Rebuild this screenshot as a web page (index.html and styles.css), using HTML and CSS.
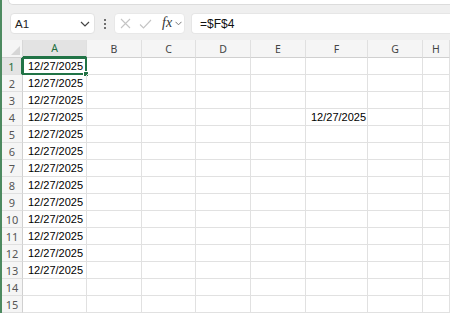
FILE: index.html
```html
<!DOCTYPE html>
<html>
<head>
<meta charset="utf-8">
<link rel="stylesheet" href="styles.css">
</head>
<body>
<div class="app">
  <div class="ribbon"></div>
  <div class="fbar">
    <div class="namebox">
      <span class="name">A1</span>
      <svg class="chev" width="10" height="6" viewBox="0 0 10 6"><path d="M1 1 L5 5 L9 1" fill="none" stroke="#444" stroke-width="1.2"/></svg>
    </div>
    <div class="dots"><i></i><i></i><i></i></div>
    <div class="fbtns">
      <svg width="11" height="11" viewBox="0 0 11 11"><path d="M1 1 L10 10 M10 1 L1 10" stroke="#c4c4c4" stroke-width="1.1" fill="none"/></svg>
      <svg width="13" height="10" viewBox="0 0 13 10"><path d="M1 5.5 L4.5 9 L12 1" stroke="#c4c4c4" stroke-width="1.1" fill="none"/></svg>
      <span class="fx">fx</span>
      <svg class="chev-s" width="7" height="5" viewBox="0 0 7 5"><path d="M0.5 0.8 L3.5 3.8 L6.5 0.8" fill="none" stroke="#777" stroke-width="1"/></svg>
    </div>
    <div class="finput">=$F$4</div>
  </div>
  <div class="sheet">
    <div class="corner"><svg width="9" height="9" viewBox="0 0 9 9"><path d="M9 0 L9 9 L0 9 Z" fill="#d6d6d6"/></svg></div>
    <div class="ch sel">A</div><div class="ch">B</div><div class="ch">C</div><div class="ch">D</div><div class="ch">E</div><div class="ch">F</div><div class="ch">G</div><div class="ch">H</div>

    <div class="rh sel">1</div><div class="c active">12/27/2025<span class="selbox"><span class="handle"></span></span></div><div class="c"></div><div class="c"></div><div class="c"></div><div class="c"></div><div class="c"></div><div class="c"></div><div class="c"></div>
    <div class="rh">2</div><div class="c">12/27/2025</div><div class="c"></div><div class="c"></div><div class="c"></div><div class="c"></div><div class="c"></div><div class="c"></div><div class="c"></div>
    <div class="rh">3</div><div class="c">12/27/2025</div><div class="c"></div><div class="c"></div><div class="c"></div><div class="c"></div><div class="c"></div><div class="c"></div><div class="c"></div>
    <div class="rh">4</div><div class="c">12/27/2025</div><div class="c"></div><div class="c"></div><div class="c"></div><div class="c"></div><div class="c">12/27/2025</div><div class="c"></div><div class="c"></div>
    <div class="rh">5</div><div class="c">12/27/2025</div><div class="c"></div><div class="c"></div><div class="c"></div><div class="c"></div><div class="c"></div><div class="c"></div><div class="c"></div>
    <div class="rh">6</div><div class="c">12/27/2025</div><div class="c"></div><div class="c"></div><div class="c"></div><div class="c"></div><div class="c"></div><div class="c"></div><div class="c"></div>
    <div class="rh">7</div><div class="c">12/27/2025</div><div class="c"></div><div class="c"></div><div class="c"></div><div class="c"></div><div class="c"></div><div class="c"></div><div class="c"></div>
    <div class="rh">8</div><div class="c">12/27/2025</div><div class="c"></div><div class="c"></div><div class="c"></div><div class="c"></div><div class="c"></div><div class="c"></div><div class="c"></div>
    <div class="rh">9</div><div class="c">12/27/2025</div><div class="c"></div><div class="c"></div><div class="c"></div><div class="c"></div><div class="c"></div><div class="c"></div><div class="c"></div>
    <div class="rh">10</div><div class="c">12/27/2025</div><div class="c"></div><div class="c"></div><div class="c"></div><div class="c"></div><div class="c"></div><div class="c"></div><div class="c"></div>
    <div class="rh">11</div><div class="c">12/27/2025</div><div class="c"></div><div class="c"></div><div class="c"></div><div class="c"></div><div class="c"></div><div class="c"></div><div class="c"></div>
    <div class="rh">12</div><div class="c">12/27/2025</div><div class="c"></div><div class="c"></div><div class="c"></div><div class="c"></div><div class="c"></div><div class="c"></div><div class="c"></div>
    <div class="rh">13</div><div class="c">12/27/2025</div><div class="c"></div><div class="c"></div><div class="c"></div><div class="c"></div><div class="c"></div><div class="c"></div><div class="c"></div>
    <div class="rh">14</div><div class="c"></div><div class="c"></div><div class="c"></div><div class="c"></div><div class="c"></div><div class="c"></div><div class="c"></div><div class="c"></div>
    <div class="rh">15</div><div class="c"></div><div class="c"></div><div class="c"></div><div class="c"></div><div class="c"></div><div class="c"></div><div class="c"></div><div class="c"></div>
  </div>
</div>
</body>
</html>
```

FILE: styles.css
```css
* { box-sizing: border-box; }
html, body { margin: 0; padding: 0; }
body {
  width: 450px;
  height: 313px;
  overflow: hidden;
  background: #ffffff;
  font-family: "Liberation Sans", Arial, sans-serif;
}
.app {
  width: 450px;
  height: 313px;
  overflow: hidden;
  background: #efefef;
  border-left: 2px solid #4d8a60;
  display: flex;
  flex-direction: column;
}
.ribbon {
  height: 5px;
  margin-left: 6px;
  background: #ffffff;
  border-bottom: 1px solid #dcdcdc;
  border-left: 1px solid #dcdcdc;
  border-bottom-left-radius: 6px;
  flex: none;
}
.fbar {
  flex: none;
  height: 35px;
  display: flex;
  align-items: flex-start;
  padding: 8px 0 0 8px;
}
.namebox {
  width: 85px;
  height: 21px;
  background: #fff;
  border: 1px solid #e2e2e2;
  border-radius: 4px;
  display: flex;
  align-items: center;
  justify-content: space-between;
  padding: 0 4px 0 4px;
}
.name { font-size: 11.5px; color: #222; }
.chev { margin-top: 1px; }
.dots {
  width: 19px;
  height: 21px;
  display: flex;
  flex-direction: column;
  align-items: center;
  justify-content: center;
  gap: 2px;
}
.dots i {
  display: block;
  width: 2px;
  height: 2px;
  border-radius: 1px;
  background: #444;
}
.fbtns {
  width: 71px;
  height: 21px;
  background: #fff;
  border: 1px solid #e8e8e8;
  border-radius: 4px;
  display: flex;
  align-items: center;
  padding-left: 4px;
}
.fbtns svg { flex: none; }
.fbtns svg:nth-child(1) { margin-left: 1px; }
.fbtns svg:nth-child(2) { margin-left: 8px; }
.fx {
  font-family: "Liberation Serif", "Times New Roman", serif;
  font-style: italic;
  font-size: 14px;
  color: #333;
  margin-left: 10px;
  line-height: 1;
  margin-top: -2px;
}
.chev-s { margin-left: 3px; }
.finput {
  flex: 1;
  margin-left: 6px;
  height: 21px;
  background: #fff;
  border: 1px solid #e6e6e6;
  border-right: none;
  border-radius: 4px 0 0 4px;
  font-size: 12px;
  color: #111;
  display: flex;
  align-items: center;
  padding-left: 8px;
}
.sheet {
  flex: none;
  display: grid;
  grid-template-columns: 21px 64px 55px 54px 55px 55px 62px 55px 1fr;
  grid-template-rows: 18px;
  grid-auto-rows: 17px;
  background: #fff;
}
.corner {
  background: #f5f5f5;
  border-right: 1px solid #d8d8d8;
  border-bottom: 1px solid #d0d0d0;
  display: flex;
  align-items: flex-end;
  justify-content: flex-end;
  padding: 0 2px 2px 0;
}
.ch {
  background: #f5f5f5;
  border-right: 1px solid #e0e0e0;
  border-bottom: 1px solid #d0d0d0;
  font-family: "Noto Sans", "Liberation Sans", sans-serif;
  font-size: 10.5px;
  color: #444;
  display: flex;
  align-items: center;
  justify-content: center;
}
.ch.sel {
  background: #e3e3e3;
  color: #1e6e3e;
  border-bottom: 2px solid #217346;
}
.rh {
  background: #f5f5f5;
  border-right: 1px solid #d0d0d0;
  border-bottom: 1px solid #e0e0e0;
  font-family: "Noto Sans", "Liberation Sans", sans-serif;
  font-size: 11px;
  color: #555;
  display: flex;
  align-items: center;
  justify-content: center;
}
.rh.sel {
  background: #e3e3e3;
  color: #1e6e3e;
  border-right: 2px solid #217346;
}
.c {
  position: relative;
  border-right: 1px solid #e1e1e1;
  border-bottom: 1px solid #e1e1e1;
  font-size: 11px;
  color: #000;
  display: flex;
  align-items: flex-end;
  padding: 0 0 1px 5px;
  line-height: 13px;
  white-space: nowrap;
}
.selbox {
  position: absolute;
  left: -1px;
  top: -1px;
  right: -1px;
  bottom: -1px;
  border: 2px solid #217346;
}
.handle {
  position: absolute;
  right: -4px;
  bottom: -4px;
  width: 6px;
  height: 6px;
  background: #217346;
  border: 1px solid #fff;
}
```
